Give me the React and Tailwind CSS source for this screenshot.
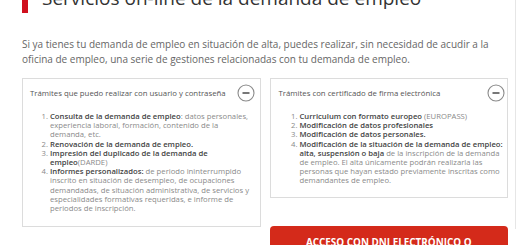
import React from "react";

function MinusCircle() {
  return (
    <svg width="18" height="18" viewBox="0 0 18 18" className="shrink-0">
      <circle cx="9" cy="9" r="8" fill="none" stroke="#8a8a8a" strokeWidth="1.1" />
      <line x1="5.5" y1="9" x2="12.5" y2="9" stroke="#555" strokeWidth="1.6" />
    </svg>
  );
}

export default function App() {
  return (
    <div
      className="w-[520px] h-[245px] overflow-hidden bg-white"
      style={{ fontFamily: '"Open Sans", "Noto Sans", sans-serif' }}
    >
      <div className="pl-[22px] pr-[7px] w-[516px] border-r border-[#e6e6e6] h-[245px]">
        <div className="-mt-[16px] border-l-[6px] border-[#d0101e] pl-[14px]">
          <h1 className="text-[19px] leading-[29px] text-[#333] font-normal">
            Servicios on-line de la demanda de empleo
          </h1>
        </div>
        <p className="mt-[24px] text-[10px] leading-[15px] text-[#666]">
          Si ya tienes tu demanda de empleo en situación de alta, puedes realizar, sin necesidad de acudir a la oficina de empleo, una serie de gestiones relacionadas con tu demanda de empleo.
        </p>
        <div className="mt-[11px] grid grid-cols-2 gap-[9px] items-start">
          <div className="border border-[#dcdcdc] pl-[7px] pr-[5px] pt-[5px] pb-[13px]">
            <div className="flex items-center justify-between">
              <span className="text-[7.8px] leading-[18px] text-[#555]">
                Trámites que puedo realizar con usuario y contraseña
              </span>
              <MinusCircle />
            </div>
            <ol className="mt-[10px] ml-[20px] pr-[1px] list-decimal text-[7.7px] leading-[9.2px] text-[#8a8a8a] marker:text-[#8a8a8a]">
              <li>
                <b className="font-semibold text-[#444]">Consulta de la demanda de empleo</b>: datos personales, experiencia laboral, formación, contenido de la demanda, etc.
              </li>
              <li>
                <b className="font-semibold text-[#444]">Renovación de la demanda de empleo.</b>
              </li>
              <li>
                <b className="font-semibold text-[#444]">Impresión del duplicado de la demanda de empleo</b>(DARDE)
              </li>
              <li>
                <b className="font-semibold text-[#444]">Informes personalizados:</b> de periodo ininterrumpido inscrito en situación de desempleo, de ocupaciones demandadas, de situación administrativa, de servicios y especialidades formativas requeridas, e informe de periodos de inscripción.
              </li>
            </ol>
          </div>
          <div className="flex flex-col gap-[28px]">
            <div className="border border-[#dcdcdc] pl-[8px] pr-[2px] pt-[5px] pb-[11px]">
              <div className="flex items-center justify-between">
                <span className="text-[7.8px] leading-[18px] text-[#555]">
                  Trámites con certificado de firma electrónica
                </span>
                <MinusCircle />
              </div>
              <ol className="mt-[10px] ml-[21px] list-decimal text-[7.7px] leading-[9.2px] text-[#8a8a8a] marker:text-[#8a8a8a]">
                <li>
                  <b className="font-semibold text-[#444]">Curriculum con formato europeo</b> (EUROPASS)
                </li>
                <li>
                  <b className="font-semibold text-[#444]">Modificación de datos profesionales</b>
                </li>
                <li>
                  <b className="font-semibold text-[#444]">Modificación de datos personales.</b>
                </li>
                <li>
                  <b className="font-semibold text-[#444]">Modificación de la situación de la demanda de empleo: alta, suspensión o baja</b> de la inscripción de la demanda de empleo. El alta únicamente podrán realizarla las personas que hayan estado previamente inscritas como demandantes de empleo.
                </li>
              </ol>
            </div>
            <button className="h-[40px] rounded-[4px] bg-[#d42a1a] text-white text-[9.9px] font-bold leading-[12px] pt-[10px] flex justify-center items-start">
              ACCESO CON DNI ELECTRÓNICO O
            </button>
          </div>
        </div>
      </div>
    </div>
  );
}
